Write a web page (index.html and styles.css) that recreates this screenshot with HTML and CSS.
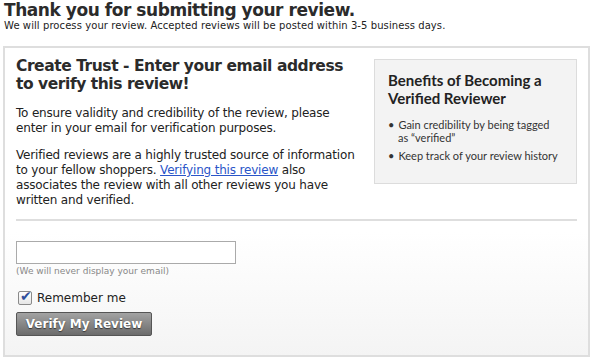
FILE: index.html
```html
<!DOCTYPE html>
<html lang="en">
<head>
    <meta charset="UTF-8">
    <title>Thank you for submitting your review</title>
    <link rel="stylesheet" href="styles.css">
</head>
<body>
    <h1 class="page-title">Thank you for submitting your review.</h1>
    <p class="page-sub">We will process your review. Accepted reviews will be posted within 3-5 business days.</p>

    <div class="verify-box">
        <div class="verify-top">
            <div class="verify-main">
                <h2>Create Trust - Enter your email address to verify this review!</h2>
                <p>To ensure validity and credibility of the review, please enter in your email for verification purposes.</p>
                <p>Verified reviews are a highly trusted source of information to your fellow shoppers. <a href="#">Verifying this review</a> also associates the review with all other reviews you have written and verified.</p>
            </div>
            <div class="benefits">
                <h3>Benefits of Becoming a Verified Reviewer</h3>
                <ul>
                    <li>Gain credibility by being tagged as &ldquo;verified&rdquo;</li>
                    <li>Keep track of your review history</li>
                </ul>
            </div>
        </div>

        <hr class="divider">

        <form class="verify-form">
            <input type="text" class="email-input">
            <div class="hint">(We will never display your email)</div>
            <label class="remember"><input type="checkbox" checked> Remember me</label>
            <button type="button" class="verify-btn">Verify My Review</button>
        </form>
    </div>
</body>
</html>
```

FILE: styles.css
```css
body {
    margin: 0;
    padding: 0 6px 0 3px;
    font-family: 'DejaVu Sans', Verdana, sans-serif;
    color: #222;
    background: white;
}

.page-title {
    font-size: 17px;
    line-height: 20px;
    letter-spacing: -0.45px;
    margin: 0 0 0 1px;
    color: #2b2b2b;
}

.page-sub {
    font-size: 10px;
    line-height: 12px;
    letter-spacing: 0.08px;
    margin: 0 0 14px 1px;
    color: #222;
}

.verify-box {
    border: 2px solid #dedede;
    padding: 11px 11px 19px 11px;
    background: linear-gradient(to bottom, white 60%, #f4f4f4 100%);
}

.verify-top {
    display: flex;
    gap: 13px;
}

.verify-main {
    flex: 1;
}

.verify-main h2 {
    font-size: 15.5px;
    line-height: 18px;
    letter-spacing: -0.45px;
    margin: -2px 0 13px 0;
    color: #2b2b2b;
}

.verify-main p {
    font-size: 12px;
    line-height: 15px;
    letter-spacing: -0.18px;
    margin: 0 0 12px 0;
    color: #222;
}

.verify-main p:last-child {
    margin-bottom: 5px;
}

.verify-main a {
    color: #2a55c8;
}

.benefits {
    width: 203px;
    height: 125px;
    box-sizing: border-box;
    background: #f3f3f3;
    border: 1px solid #dcdcdc;
    padding: 11px 16px 11px 13px;
    font-family: 'Lato', 'Open Sans', sans-serif;
}

.benefits h3 {
    font-size: 15px;
    line-height: 18px;
    margin: 0 0 11px 0;
    color: #222;
}

.benefits ul {
    list-style: none;
    margin: 0;
    padding: 0;
    font-size: 11px;
    line-height: 13px;
    color: #333;
}

.benefits li {
    padding-left: 10px;
    text-indent: -10px;
    margin-bottom: 5px;
}

.benefits li::before {
    content: "\2022";
    padding-right: 4px;
}

.divider {
    border: none;
    border-top: 2px solid #dedede;
    margin: 6px 0 20px 0;
}

.verify-form {
    display: flex;
    flex-direction: column;
    align-items: flex-start;
}

.email-input {
    width: 220px;
    height: 23px;
    box-sizing: border-box;
    border: 1px solid #aaa;
    margin: 0;
}

.hint {
    font-size: 9px;
    color: #888;
    margin-top: 2px;
}

.remember {
    font-size: 12px;
    margin-top: 15px;
    display: flex;
    align-items: center;
    gap: 5px;
}

.remember input {
    appearance: none;
    position: relative;
    margin: 0 0 0 2px;
    width: 14px;
    height: 14px;
    border: 1px solid #8a8a8a;
    border-radius: 2px;
    background: linear-gradient(to bottom, #ffffff, #e6e6e6);
}

.remember input:checked::after {
    content: "\2714";
    position: absolute;
    left: 1px;
    top: -4px;
    font-size: 14px;
    color: #2f4f9c;
}

.verify-btn {
    margin-top: 7px;
    width: 136px;
    height: 24px;
    border: 1px solid #555;
    border-radius: 2px;
    background: linear-gradient(to bottom, #a3a3a3, #6b6b6b);
    color: white;
    font-family: 'DejaVu Sans', Verdana, sans-serif;
    font-weight: bold;
    font-size: 12px;
    text-shadow: 0 1px 1px #333;
    padding: 0;
}
```
